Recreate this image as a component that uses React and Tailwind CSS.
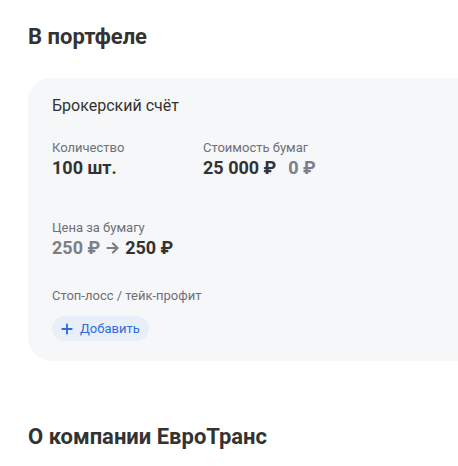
import { Plus } from "lucide-react";

const font = { fontFamily: "Roboto, 'Noto Sans', sans-serif" };

const Label = ({ children }) => (
  <div className="text-[13px] leading-[16px] text-[#6d7078]">{children}</div>
);

export default function App() {
  return (
    <div className="w-[458px] h-[466px] overflow-hidden bg-white pl-[28px] pt-[24px]" style={font}>
      <h2 className="text-[22px] leading-[26px] font-bold text-[#333333]">В портфеле</h2>

      <div className="mt-[28px] w-[480px] rounded-[24px] bg-[#f6f7f8] pl-[24px] pt-[18px] pb-[20px]">
        <div className="text-[16px] leading-[20px] text-[#333333]">Брокерский счёт</div>

        <div className="mt-[24px] flex">
          <div className="w-[151px]">
            <Label>Количество</Label>
            <div className="text-[18px] leading-[24px] font-bold text-[#333333]">100 шт.</div>
          </div>
          <div>
            <Label>Стоимость бумаг</Label>
            <div className="flex gap-[12px] text-[18px] leading-[24px] font-bold">
              <span className="text-[#333333]">25 000 ₽</span>
              <span className="text-[#7c7f85]">0 ₽</span>
            </div>
          </div>
        </div>

        <div className="mt-[40px]">
          <Label>Цена за бумагу</Label>
          <div className="flex items-center text-[18px] leading-[24px] font-bold">
            <span className="text-[#7c7f85]">250 ₽</span>
            <svg width="13" height="12" viewBox="0 0 13 12" className="mx-[6px] text-[#7c7f85]" fill="none" stroke="currentColor" strokeWidth="2.2" strokeLinecap="round" strokeLinejoin="round">
              <path d="M1.5 6h10M7 1.5 11.5 6 7 10.5" />
            </svg>
            <span className="text-[#333333]">250 ₽</span>
          </div>
        </div>

        <div className="mt-[28px]">
          <Label>Стоп-лосс / тейк-профит</Label>
          <button className="mt-[12px] flex h-[25px] items-center gap-[5px] rounded-full bg-[#e9eff8] pl-[7px] pr-[9px] text-[13px] text-[#2e6be0]">
            <Plus size={16} strokeWidth={2.8} />
            Добавить
          </button>
        </div>
      </div>

      <h2 className="mt-[63px] text-[22px] leading-[26px] font-bold text-[#333333]">О компании ЕвроТранс</h2>
    </div>
  );
}
